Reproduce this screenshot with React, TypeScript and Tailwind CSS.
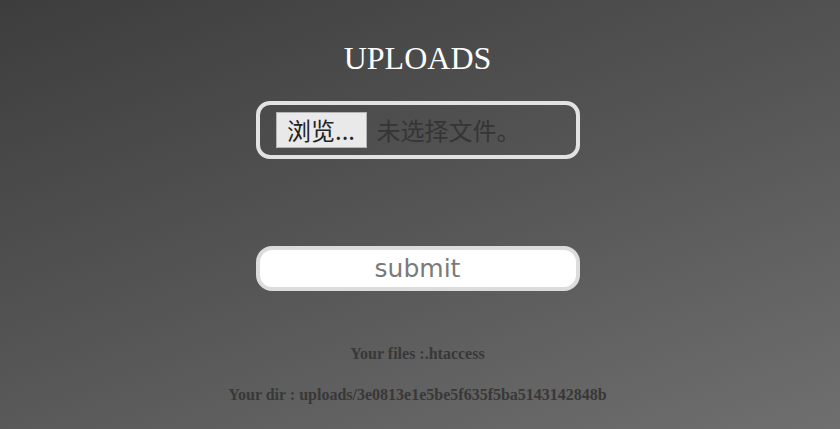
import React from "react";

export default function App() {
  return (
    <div className="h-[429px] w-full overflow-hidden bg-[linear-gradient(160deg,#3d3d3d_0%,#555555_50%,#6f6f6f_100%)] flex flex-col items-center pr-[5px] font-['Liberation_Serif',serif]">
      {/* title */}
      <h1 className="mt-[42px] text-[32px] leading-[32px] text-white">UPLOADS</h1>

      {/* file picker */}
      <div className="mt-[27px] w-[324px] h-[58px] rounded-[14px] border-4 border-[#e2e2e2] flex items-center pl-4 font-['Noto_Sans_CJK_SC',sans-serif]">
        <div className="w-[91px] h-[36px] bg-[#e9e9e9] border border-[#b4b4b4] flex items-center justify-center text-[24px] text-[#222] leading-none">
          浏览...
        </div>
        <span className="ml-[10px] text-[24px] leading-none text-[#353535]">未选择文件。</span>
      </div>

      {/* submit */}
      <button className="mt-[87px] w-[324px] h-[45px] rounded-[16px] border-4 border-[#dcdcdc] bg-white text-[25px] leading-none text-[#7a7a7a] font-['DejaVu_Sans',sans-serif]">
        submit
      </button>

      {/* info */}
      <p className="mt-[53px] text-[16px] leading-[20px] font-bold text-[#383838]">Your files :.htaccess</p>
      <p className="mt-[21px] text-[16px] leading-[20px] font-bold text-[#383838]">
        Your dir : uploads/3e0813e1e5be5f635f5ba5143142848b
      </p>
    </div>
  );
}
